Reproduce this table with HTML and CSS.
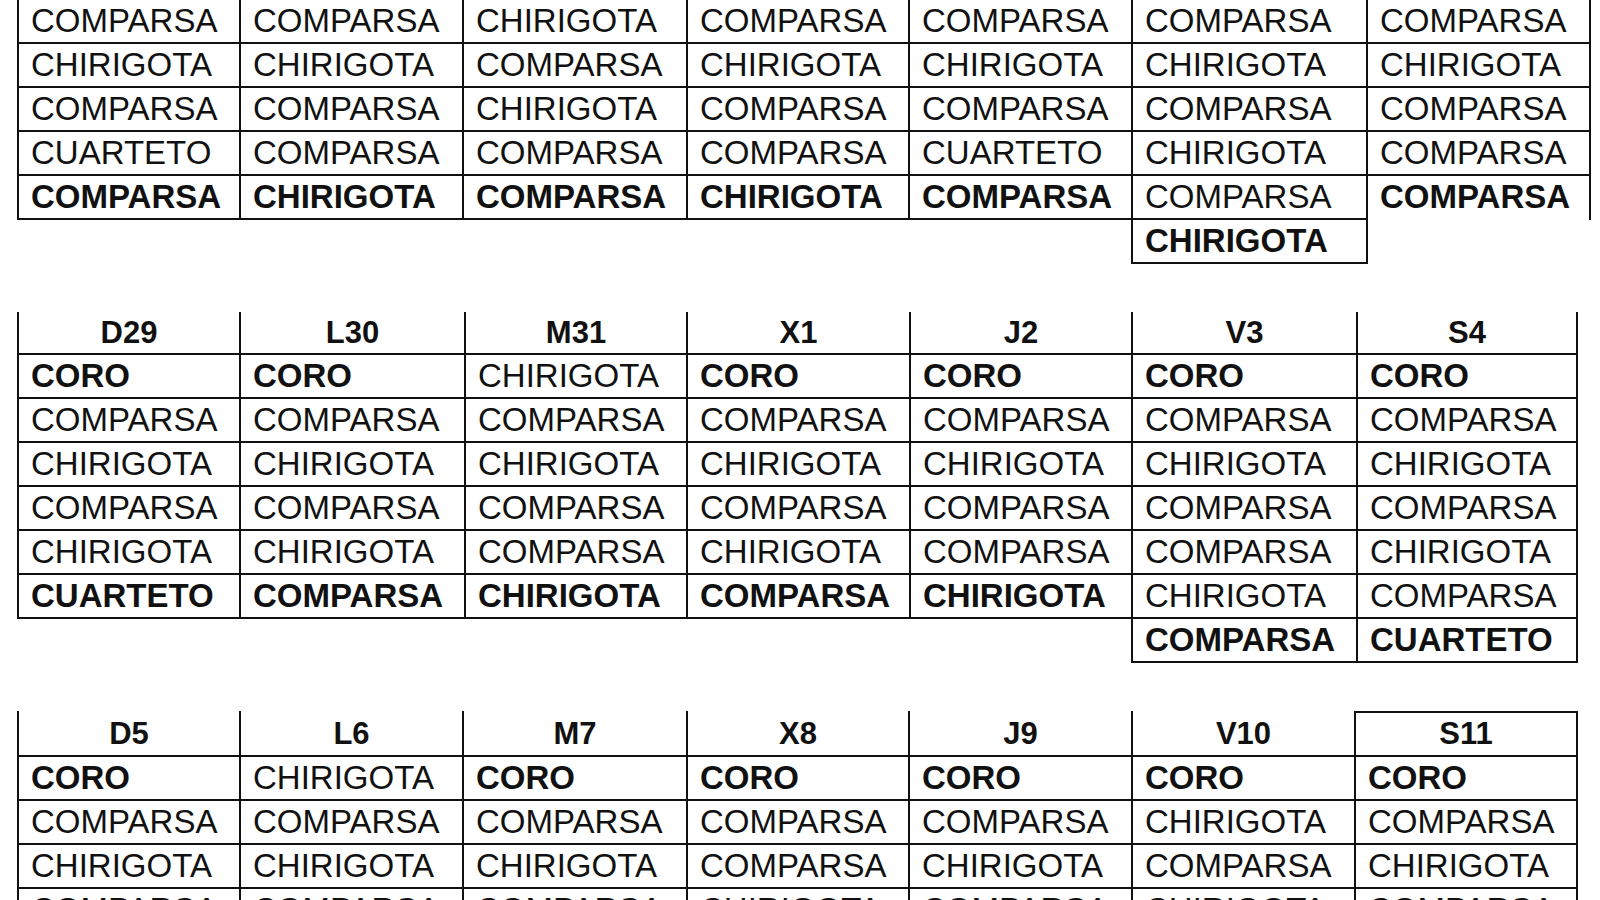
FILE: index.html
```html
<!DOCTYPE html>
<html lang="es">
<head>
<meta charset="utf-8">
<title>Calendario de agrupaciones</title>
<link rel="stylesheet" href="styles.css">
</head>
<body>
<main class="page">
  <section class="grid t1">
    <div class="c">COMPARSA</div><div class="c">COMPARSA</div><div class="c">CHIRIGOTA</div><div class="c">COMPARSA</div><div class="c">COMPARSA</div><div class="c">COMPARSA</div><div class="c">COMPARSA</div>
    <div class="c">CHIRIGOTA</div><div class="c">CHIRIGOTA</div><div class="c">COMPARSA</div><div class="c">CHIRIGOTA</div><div class="c">CHIRIGOTA</div><div class="c">CHIRIGOTA</div><div class="c">CHIRIGOTA</div>
    <div class="c">COMPARSA</div><div class="c">COMPARSA</div><div class="c">CHIRIGOTA</div><div class="c">COMPARSA</div><div class="c">COMPARSA</div><div class="c">COMPARSA</div><div class="c">COMPARSA</div>
    <div class="c">CUARTETO</div><div class="c">COMPARSA</div><div class="c">COMPARSA</div><div class="c">COMPARSA</div><div class="c">CUARTETO</div><div class="c">CHIRIGOTA</div><div class="c">COMPARSA</div>
    <div class="c b">COMPARSA</div><div class="c b">CHIRIGOTA</div><div class="c b">COMPARSA</div><div class="c b">CHIRIGOTA</div><div class="c b">COMPARSA</div><div class="c">COMPARSA</div><div class="c b nb">COMPARSA</div>
    <div class="c b start col6">CHIRIGOTA</div>
  </section>

  <section class="grid t2">
    <div class="h">D29</div><div class="h">L30</div><div class="h">M31</div><div class="h">X1</div><div class="h">J2</div><div class="h">V3</div><div class="h">S4</div>
    <div class="c b">CORO</div><div class="c b">CORO</div><div class="c">CHIRIGOTA</div><div class="c b">CORO</div><div class="c b">CORO</div><div class="c b">CORO</div><div class="c b">CORO</div>
    <div class="c">COMPARSA</div><div class="c">COMPARSA</div><div class="c">COMPARSA</div><div class="c">COMPARSA</div><div class="c">COMPARSA</div><div class="c">COMPARSA</div><div class="c">COMPARSA</div>
    <div class="c">CHIRIGOTA</div><div class="c">CHIRIGOTA</div><div class="c">CHIRIGOTA</div><div class="c">CHIRIGOTA</div><div class="c">CHIRIGOTA</div><div class="c">CHIRIGOTA</div><div class="c">CHIRIGOTA</div>
    <div class="c">COMPARSA</div><div class="c">COMPARSA</div><div class="c">COMPARSA</div><div class="c">COMPARSA</div><div class="c">COMPARSA</div><div class="c">COMPARSA</div><div class="c">COMPARSA</div>
    <div class="c">CHIRIGOTA</div><div class="c">CHIRIGOTA</div><div class="c">COMPARSA</div><div class="c">CHIRIGOTA</div><div class="c">COMPARSA</div><div class="c">COMPARSA</div><div class="c">CHIRIGOTA</div>
    <div class="c b">CUARTETO</div><div class="c b">COMPARSA</div><div class="c b">CHIRIGOTA</div><div class="c b">COMPARSA</div><div class="c b">CHIRIGOTA</div><div class="c">CHIRIGOTA</div><div class="c">COMPARSA</div>
    <div class="c b start col6">COMPARSA</div><div class="c b">CUARTETO</div>
  </section>

  <section class="grid t3">
    <div class="h">D5</div><div class="h">L6</div><div class="h">M7</div><div class="h">X8</div><div class="h">J9</div><div class="h">V10</div><div class="h boxed">S11</div>
    <div class="c b">CORO</div><div class="c">CHIRIGOTA</div><div class="c b">CORO</div><div class="c b">CORO</div><div class="c b">CORO</div><div class="c b">CORO</div><div class="c b">CORO</div>
    <div class="c">COMPARSA</div><div class="c">COMPARSA</div><div class="c">COMPARSA</div><div class="c">COMPARSA</div><div class="c">COMPARSA</div><div class="c">CHIRIGOTA</div><div class="c">COMPARSA</div>
    <div class="c">CHIRIGOTA</div><div class="c">CHIRIGOTA</div><div class="c">CHIRIGOTA</div><div class="c">COMPARSA</div><div class="c">CHIRIGOTA</div><div class="c">COMPARSA</div><div class="c">CHIRIGOTA</div>
    <div class="c">COMPARSA</div><div class="c">COMPARSA</div><div class="c">COMPARSA</div><div class="c">CHIRIGOTA</div><div class="c">COMPARSA</div><div class="c">CHIRIGOTA</div><div class="c">COMPARSA</div>
  </section>
</main>
</body>
</html>
```

FILE: styles.css
```css
html, body {
  margin: 0;
  padding: 0;
  background: #ffffff;
}

body {
  width: 1600px;
  height: 900px;
  overflow: hidden;
  font-family: "Liberation Sans", Arial, sans-serif;
  color: #111111;
}

.page {
  display: flex;
  flex-direction: column;
  gap: 48px;
  padding-left: 19px;
}

.grid {
  display: grid;
  grid-auto-rows: auto;
  justify-content: start;
}

.t1 {
  grid-template-columns: 222px 223px 224px 222px 223px 235px 223px;
}

.t2 {
  grid-template-columns: 222px 225px 222px 223px 222px 225px 220px;
}

.t3 {
  grid-template-columns: 222px 223px 224px 222px 223px 223px 222px;
}

.c,
.h {
  box-sizing: border-box;
  border-right: 2px solid #111111;
  border-bottom: 2px solid #111111;
  white-space: nowrap;
}

.grid > :nth-child(7n+1),
.start {
  box-shadow: -2px 0 0 0 #111111;
}

.c {
  height: 44px;
  padding-left: 12px;
  font-size: 33px;
  line-height: 42px;
}

.b {
  font-weight: bold;
}

.nb {
  border-bottom: 0;
}

.col6 {
  grid-column: 6;
}

.h {
  height: 43px;
  font-size: 31px;
  font-weight: bold;
  line-height: 41px;
  text-align: center;
}

.t3 .h {
  height: 46px;
  line-height: 46px;
}

.h.boxed {
  box-shadow: inset 0 2px 0 0 #111111;
}
```
